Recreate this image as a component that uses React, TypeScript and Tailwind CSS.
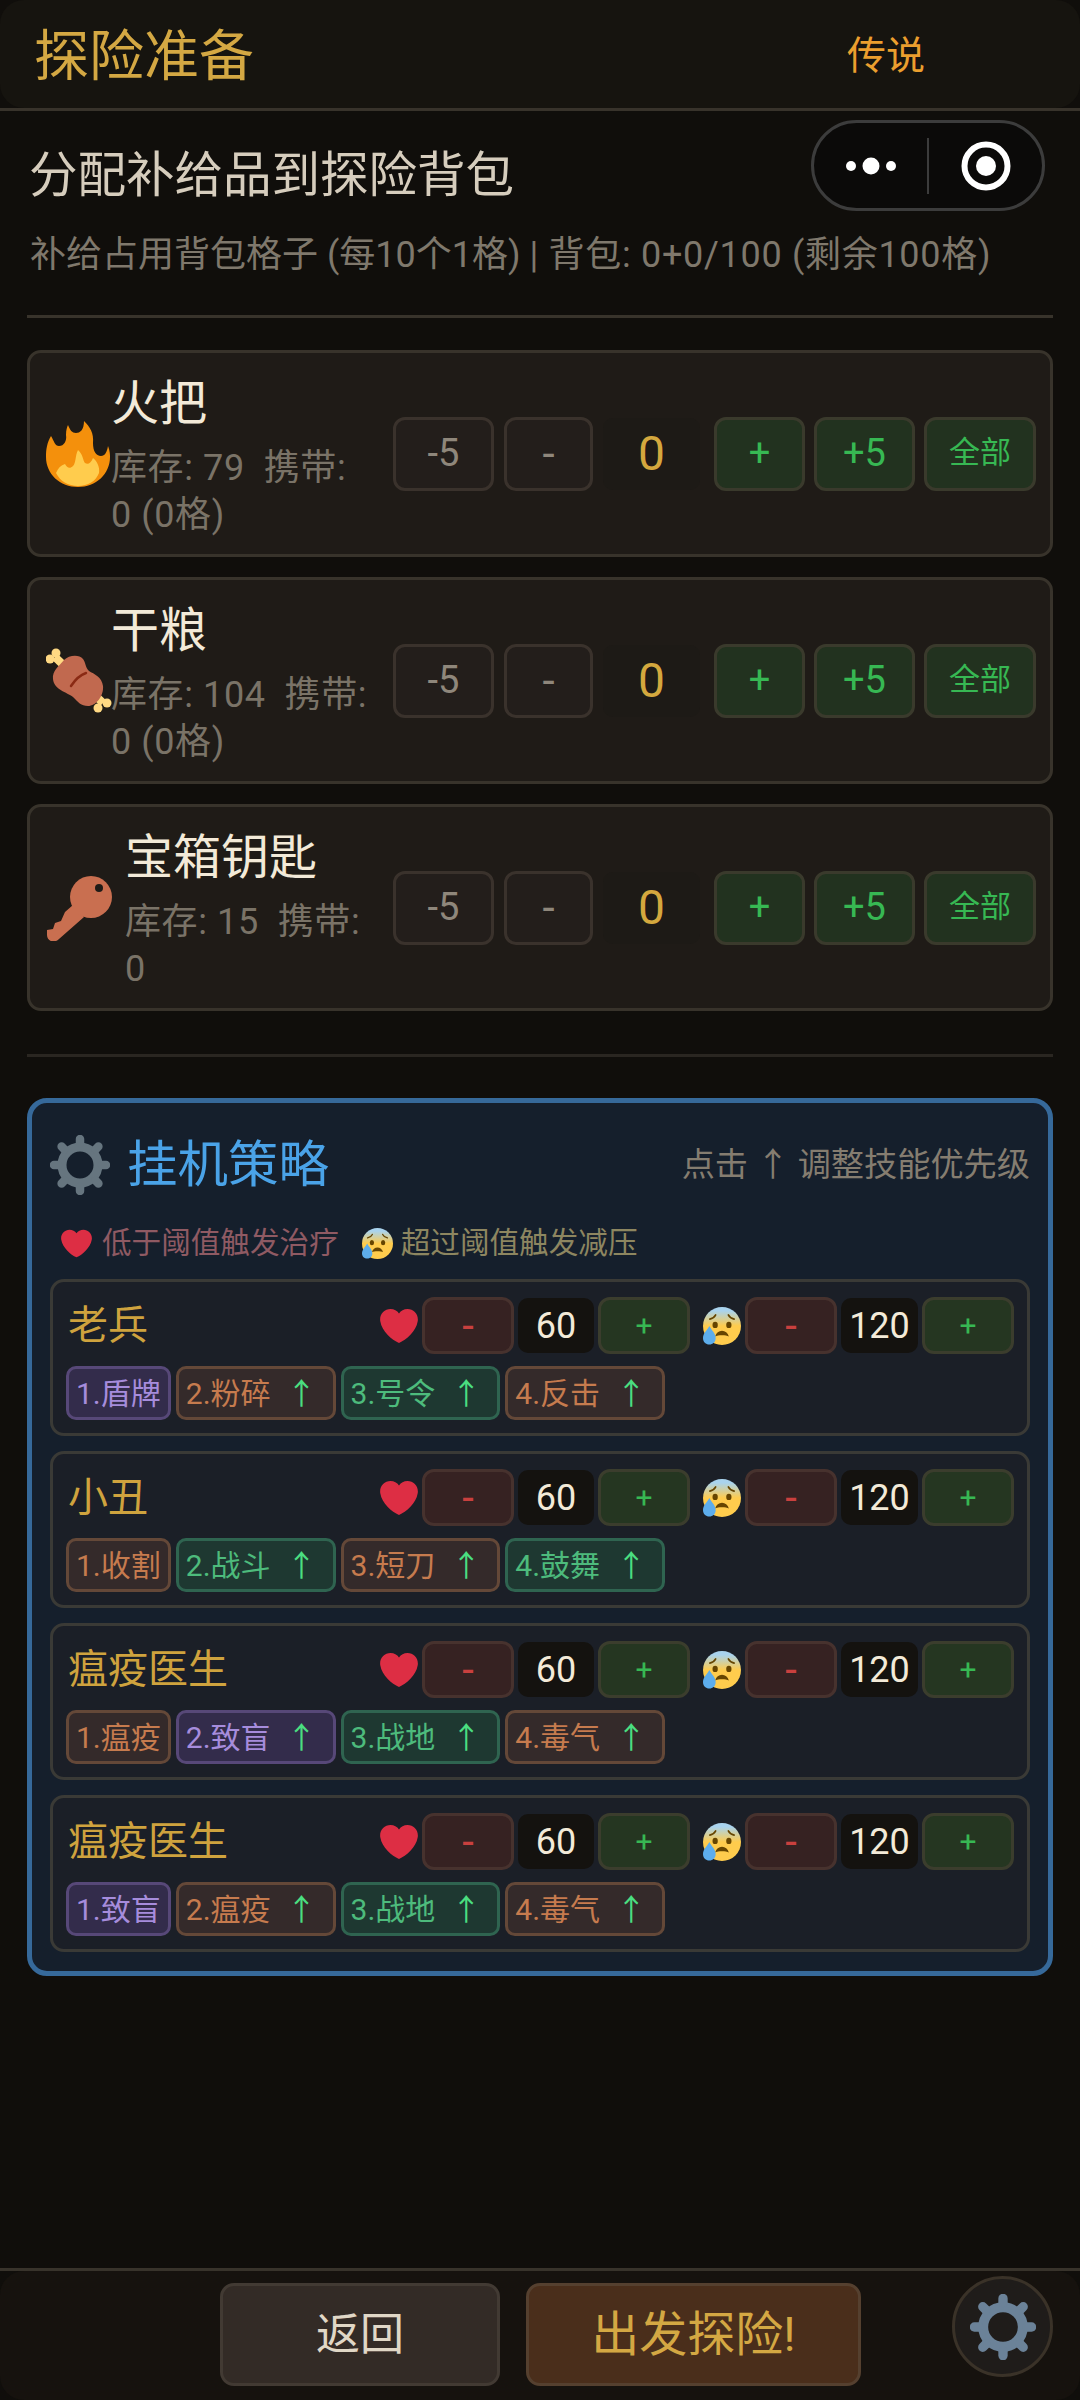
const cjk = `font-['Roboto','Noto_Sans_CJK_SC',sans-serif]`

const Gear = ({ className }: { className: string }) => (
  <svg viewBox="0 0 60 60" className={className} fill="none" stroke="currentColor">
    <circle cx="30" cy="30" r="18" strokeWidth="9" />
    {[0, 45, 90, 135, 180, 225, 270, 315].map(a => (
      <line key={a} x1="30" y1="8" x2="30" y2="4" strokeWidth="8.5" strokeLinecap="round" transform={`rotate(${a} 30 30)`} />
    ))}
  </svg>
)

const Fire = () => (
  <svg viewBox="0 0 64 66" className="h-[66px] w-[64px]">
    <path fill="#F4900C" d="M5 15C8 20 9 25 13 25C18 25 21 20 20 14C20 9 21 6 22 4C24 9 26 12 30 12C34 12 38 9 38 0C44 6 48 12 47 22C47 30 50 35 55 35C59 35 61 31 62 25C64 30 64 34 64 36C64 53 50 66 32 66C14 66 0 53 0 36C0 28 1 22 5 15Z" />
    <path fill="#FFCC4D" d="M32 29C37 33 37 40 39 42C42 44 45 42 47 37C51 40 54 46 53 52C50 60 42 65 32 65C22 65 14 60 10 52C12 47 15 44 19 43C21 47 24 48 27 45C30 42 29 35 32 29Z" />
  </svg>
)

const Meat = () => (
  <svg viewBox="10 12 66 66" className="h-[66px] w-[66px]">
    <line x1="19" y1="21" x2="67" y2="67" stroke="#FFD983" strokeWidth="8" />
    <circle cx="14" cy="23" r="4.5" fill="#FFD983" />
    <circle cx="20" cy="17" r="4.5" fill="#FFD983" />
    <circle cx="62" cy="72" r="4.5" fill="#FFD983" />
    <circle cx="71" cy="67" r="4.5" fill="#FFD983" />
    <path fill="#C1694F" d="M28 24C33 19 43 18 47 23C50 27 49 31 53 35C58 38 66 41 67 50C68 60 60 70 52 70C45 70 42 66 37 61C31 56 18 54 17 43C16 35 23 30 28 24Z" />
    <path fill="none" stroke="#8A2A14" strokeWidth="2.5" strokeLinecap="round" d="M35 50C39 44 44 39 50 37" />
  </svg>
)

const KeyIcon = () => (
  <svg viewBox="9 10 66 66" className="h-[66px] w-[66px]">
    <path fill="#C96F50" d="M28 47L36 40L47 52L22 74C17 79 10 76 10 70L10 65L16 64L18 58L24 56Z" />
    <circle cx="54" cy="32" r="21" fill="#C96F50" />
    <circle cx="62" cy="23" r="4" fill="#1F1B17" />
  </svg>
)

const Heart = ({ className }: { className: string }) => (
  <svg viewBox="0 0 36 36" className={className}>
    <path fill="#DD2E44" d="M35.885 11.833c0-5.45-4.418-9.868-9.867-9.868-3.308 0-6.227 1.633-8.018 4.129-1.791-2.496-4.71-4.129-8.017-4.129-5.45 0-9.868 4.417-9.868 9.868 0 .772.098 1.52.266 2.241C1.751 22.587 11.216 31.568 18 34.034c6.783-2.466 16.249-11.447 17.617-19.959.17-.721.268-1.469.268-2.242z" />
  </svg>
)

const Anxious = ({ className, id }: { className: string; id: string }) => (
  <svg viewBox="0 0 36 36" className={className}>
    <defs>
      <linearGradient id={id} x1="0" y1="0" x2="0" y2="1">
        <stop offset="0.1" stopColor="#A9D3EE" />
        <stop offset="0.5" stopColor="#FFCC4D" />
      </linearGradient>
    </defs>
    <circle cx="18" cy="18" r="18" fill={`url(#${id})`} />
    <ellipse cx="11.5" cy="17" rx="2.5" ry="3" fill="#664500" />
    <ellipse cx="24.5" cy="17" rx="2.5" ry="3" fill="#664500" />
    <path fill="none" stroke="#664500" strokeWidth="1.6" strokeLinecap="round" d="M6.5 11.5C9 11 11 9.5 12 7.5M29.5 11.5C27 11 25 9.500 24 7.500" />
    <path fill="#664500" d="M11.500 28C12.500 24.500 15 22.500 18 22.500C21 22.500 23.500 24.500 24.500 28C22 26.500 14 26.500 11.500 28Z" />
    <path fill="#5DADEC" d="M6 18C8 22 12 25 12 29.500C12 33 9.300 35.500 6 35.500C2.700 35.500 0 33 0 29.500C0 25 4 22 6 18Z" />
  </svg>
)

const items = [
  { name: "火把", icon: <Fire />, left: "-ml-[1px]", line1: "库存: 79\u00a0\u00a0携带:", line2: "0 (0格)" },
  { name: "干粮", icon: <Meat />, left: "-ml-[1px]", line1: "库存: 104\u00a0\u00a0携带:", line2: "0 (0格)" },
  { name: "宝箱钥匙", icon: <KeyIcon />, left: "ml-[13px]", line1: "库存: 15\u00a0\u00a0携带:", line2: "0" },
]

const skillTone = {
  p: "border-[#574878] bg-[#332c4b] text-[#a68cdc]",
  o: "border-[#644838] bg-[#342a2a] text-[#c67b4e]",
  g: "border-[#2f6450] bg-[#1e3831] text-[#4dbb7c]",
}

type Tone = keyof typeof skillTone

const heroes: { name: string; skills: [string, Tone][] }[] = [
  { name: "老兵", skills: [["1.盾牌", "p"], ["2.粉碎", "o"], ["3.号令", "g"], ["4.反击", "o"]] },
  { name: "小丑", skills: [["1.收割", "o"], ["2.战斗", "g"], ["3.短刀", "o"], ["4.鼓舞", "g"]] },
  { name: "瘟疫医生", skills: [["1.瘟疫", "o"], ["2.致盲", "p"], ["3.战地", "g"], ["4.毒气", "o"]] },
  { name: "瘟疫医生", skills: [["1.致盲", "p"], ["2.瘟疫", "o"], ["3.战地", "g"], ["4.毒气", "o"]] },
]

const Stepper = ({ icon, value, valueWidth }: { icon: React.ReactNode; value: number; valueWidth: string }) => (
  <div className="flex items-center gap-[4px]">
    {icon}
    <button type="button" className="h-[57px] w-[92px] rounded-[12px] border-[3px] border-[#47322e] bg-[#362222] text-[42px] leading-none text-[#c9403e]">-</button>
    <div className={`flex h-[55px] ${valueWidth} items-center justify-center rounded-[10px] bg-[#14120f] text-[36px] text-[#f3ead8]`}>{value}</div>
    <button type="button" className="h-[57px] w-[92px] rounded-[12px] border-[3px] border-[#3b3d2d] bg-[#253621] text-[30px] leading-none text-[#37b853]">+</button>
  </div>
)

const App = () => {
  return (
    <div className={`${cjk} flex h-[2400px] flex-col bg-[#100e0b]`}>
      <header className="h-[111px] shrink-0 border-b-[3px] border-[#38332b]">
        <div className="flex h-full items-center justify-between rounded-[24px] bg-[#16140f] pl-[34px] pr-[155px] pt-[4px]">
          <h1 className="text-[55px] font-normal text-[#d4a843]">探险准备</h1>
          <span className="text-[39px] text-[#eb9f2e]">传说</span>
        </div>
      </header>

      {/* wechat capsule sits on top of the page */}
      <div className="absolute left-[811px] top-[120px] flex h-[91px] w-[234px] items-center rounded-full border-[3px] border-[#3c3c3c] bg-[#0b0a09]">
        <div className="flex flex-1 items-center justify-center">
          <svg viewBox="0 0 50 20" className="h-[20px] w-[50px]" fill="#fff">
            <circle cx="5" cy="10" r="5" />
            <circle cx="25" cy="10" r="8.500" />
            <circle cx="45" cy="10" r="5" />
          </svg>
        </div>
        <div className="h-[56px] w-[2px] bg-[#3c3c3c]" />
        <div className="flex flex-1 items-center justify-center">
          <svg viewBox="0 0 50 50" className="h-[50px] w-[50px]">
            <circle cx="25" cy="25" r="21.500" fill="none" stroke="#fff" strokeWidth="6" />
            <circle cx="25" cy="25" r="10" fill="#fff" />
          </svg>
        </div>
      </div>

      <main className="flex-1 px-[27px]">
        <p className="ml-[2px] pt-[35px] text-[48.5px] leading-[60px] text-[#d6cdbd]">分配补给品到探险背包</p>
        <p className="ml-[3px] mt-[24px] whitespace-nowrap text-[36px] leading-[50px] text-[#7f786c]">
          补给占用背包格子 (每10个1格) <span className="tracking-[0.7px]">| 背包: 0+0/100 (剩余100格)</span>
        </p>
        <hr className="mt-[35px] h-[3px] border-0 bg-[#38332b]" />

        <div className="mt-[32px] flex flex-col gap-[20px]">
          {items.map(item => (
            <div key={item.name} className="flex h-[207px] items-center rounded-[14px] border-[3px] border-[#38332b] bg-[#1f1b17] pl-[16px] pr-[14px]">
              <div className="w-[66px] shrink-0">{item.icon}</div>
              <div className={`${item.left} min-w-0 flex-1 whitespace-nowrap`}>
                <div className="text-[48px] leading-[70px] text-[#f3ead8]">{item.name}</div>
                <div className="mt-[6px] text-[36px] leading-[47px] tracking-[0.6px] text-[#7a7367]">{item.line1}</div>
                <div className="text-[36px] leading-[47px] tracking-[0.6px] text-[#7a7367]">{item.line2}</div>
              </div>
              <div className="flex shrink-0 items-center gap-[10px]">
                <button type="button" className="h-[74px] w-[101px] rounded-[12px] border-[3px] border-[#3a322c] bg-[#231e1b] text-[38px] text-[#8f877b]">-5</button>
                <button type="button" className="h-[74px] w-[89px] rounded-[12px] border-[3px] border-[#3a322c] bg-[#231e1b] text-[44px] text-[#8f877b]">-</button>
                <div className="flex h-[72px] w-[97px] items-center justify-center rounded-[10px] bg-[#1d1a16] text-[48px] text-[#d4a83e]">0</div>
                <button type="button" className="ml-[4px] h-[74px] w-[91px] rounded-[12px] border-[3px] border-[#3a3a2c] bg-[#22321f] text-[38px] text-[#37b853]">+</button>
                <button type="button" className="-ml-[1px] h-[74px] w-[101px] rounded-[12px] border-[3px] border-[#3a3a2c] bg-[#22321f] text-[38px] text-[#37b853]">+5</button>
                <button type="button" className="-ml-[1px] h-[74px] w-[112px] rounded-[12px] border-[3px] border-[#3a3a2c] bg-[#22321f] text-[31px] text-[#37b853]">全部</button>
              </div>
            </div>
          ))}
        </div>

        <hr className="mt-[43px] h-[3px] border-0 bg-[#2a2621]" />

        <section className="mt-[41px] rounded-[20px] border-[5px] border-[#36699a] bg-[#151f2c] px-[18px] pb-[19px] pt-[32px]">
          <div className="flex h-[60px] items-center">
            <Gear className="h-[60px] w-[60px] text-[#66757f]" />
            <h2 className="ml-[17px] flex-1 text-[50.5px] font-normal text-[#4aa3e8]">挂机策略</h2>
            <span className="whitespace-nowrap text-[33.2px] text-[#857d70]">点击 ↑ 调整技能优先级</span>
          </div>
          <div className="mt-[28px] flex h-[40px] items-center pl-[11px] text-[29.6px]">
            <Heart className="h-[31px] w-[31px]" />
            <span className="ml-[10px] text-[#8f5a63]">低于阈值触发治疗</span>
            <Anxious id="legend-face" className="ml-[23px] h-[31px] w-[31px]" />
            <span className="ml-[8px] text-[#8d8660]">超过阈值触发减压</span>
          </div>

          <div className="mt-[16px] flex flex-col gap-[15px]">
            {heroes.map((hero, i) => (
              <div key={i} className="h-[157px] rounded-[14px] border-[3px] border-[#3a3a36] bg-[#1b1f27] pl-[13px] pr-[13px] pt-[15px]">
                <div className="flex items-center">
                  <span className="ml-[2px] flex-1 text-[40px] leading-none text-[#cfa33e]">{hero.name}</span>
                  <div className="flex items-center gap-[13px]">
                    <Stepper value={60} valueWidth="w-[76px]" icon={<Heart className="h-[38px] w-[38px]" />} />
                    <Stepper value={120} valueWidth="w-[77px]" icon={<Anxious id={`face-${i}`} className="h-[38px] w-[38px]" />} />
                  </div>
                </div>
                <div className="mt-[12px] flex gap-[5px]">
                  {hero.skills.map(([label, tone], j) => (
                    <span key={label} className={`flex h-[54px] items-center rounded-[10px] border-[3px] px-[7px] text-[30px] ${skillTone[tone]}`}>
                      {label}
                      {j > 0 && <span className="ml-[16px] mr-[9px] text-[#4ade80]">↑</span>}
                    </span>
                  ))}
                </div>
              </div>
            ))}
          </div>
        </section>
      </main>

      <footer className="h-[132px] shrink-0 border-t-[3px] border-[#38332b]">
        <div className="flex h-full items-center justify-end rounded-[24px] bg-[#16120e] pr-[27px]">
          <button type="button" className="mb-[2px] h-[103px] w-[280px] rounded-[14px] border-[3px] border-[#423a33] bg-[#332b26] text-[44px] text-[#e0d7c6]">返回</button>
          <button type="button" className="mb-[2px] ml-[26px] h-[103px] w-[335px] rounded-[14px] border-[3px] border-[#55402f] bg-[#4a2e1b] text-[48px] text-[#d4a843]">出发探险!</button>
          <button type="button" className="mb-[18px] ml-[91px] flex h-[101px] w-[101px] items-center justify-center rounded-full border-[3px] border-[#3a3228] bg-[#1f1c1a]">
            <Gear className="h-[66px] w-[66px] text-[#6b8298]" />
          </button>
        </div>
      </footer>
    </div>
  )
}

export default App
